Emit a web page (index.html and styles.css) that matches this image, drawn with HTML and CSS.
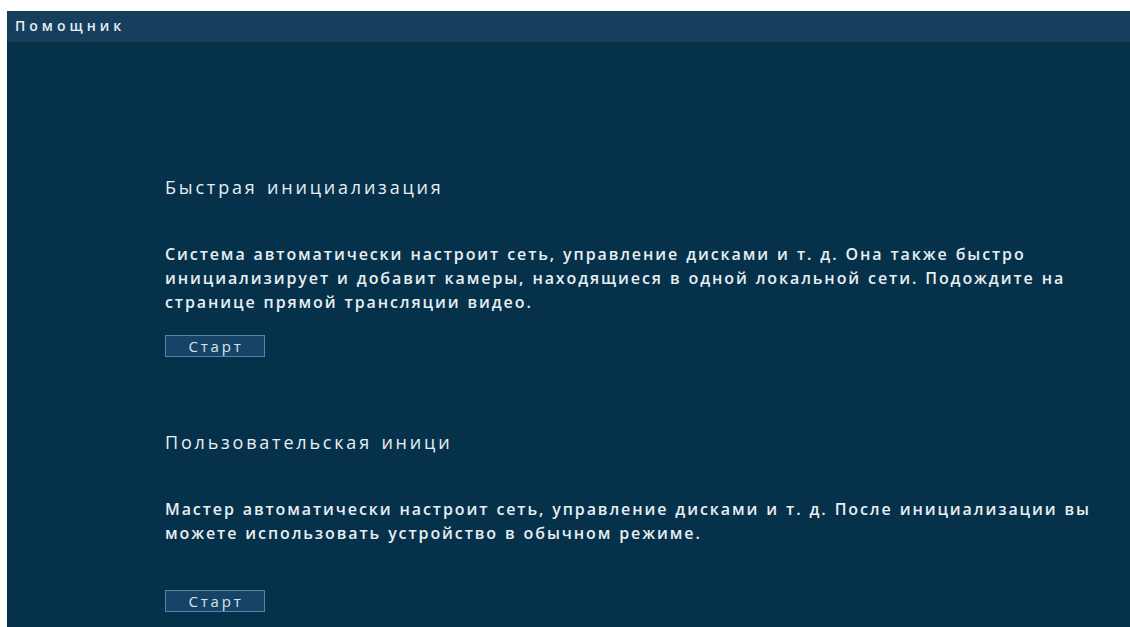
FILE: index.html
```html
<!DOCTYPE html>
<html lang="ru">
<head>
<meta charset="utf-8">
<title>Помощник</title>
<link rel="stylesheet" href="styles.css">
</head>
<body>
<div class="app">
  <header class="titlebar">Помощник</header>
  <main class="content">
    <section class="mode mode-quick">
      <h2 class="mode-title">Быстрая инициализация</h2>
      <p class="mode-desc">Система автоматически настроит сеть, управление дисками и т. д. Она также быстро инициализирует и добавит камеры, находящиеся в одной локальной сети. Подождите на странице прямой трансляции видео.</p>
      <button class="btn">Старт</button>
    </section>
    <section class="mode mode-custom">
      <h2 class="mode-title">Пользовательская иници</h2>
      <p class="mode-desc">Мастер автоматически настроит сеть, управление дисками и т. д. После инициализации вы можете использовать устройство в обычном режиме.</p>
      <button class="btn">Старт</button>
    </section>
  </main>
</div>
</body>
</html>
```
FILE: styles.css
```css
html, body {
  margin: 0;
  height: 100%;
  background: #ffffff;
  overflow: hidden;
}

body {
  padding: 11px 0 0 7px;
  box-sizing: border-box;
  font-family: "Open Sans", "Noto Sans", sans-serif;
}

.app {
  height: 616px;
  background: #05324a;
  display: flex;
  flex-direction: column;
}

/* window caption */
.titlebar {
  height: 31px;
  line-height: 30px;
  padding-left: 8px;
  background: #163f5e;
  border-bottom: 2px solid #0c2c42;
  color: #e8eef3;
  font-size: 14px;
  font-weight: 600;
  letter-spacing: 4px;
}

.content {
  padding: 129px 0 0 158px;
  color: #e9eef2;
}

.mode-title {
  margin: 0;
  font-size: 18px;
  font-weight: 500;
  letter-spacing: 2.8px;
  word-spacing: 2px;
  line-height: 28px;
}

.mode-desc {
  margin: 0;
  width: 928px;
  font-size: 16px;
  font-weight: 600;
  letter-spacing: 1.9px;
  word-spacing: 1px;
  line-height: 24px;
}

.mode-title + .mode-desc { margin-top: 41px; }
.mode-quick .btn { margin-top: 21px; }
.mode-custom { margin-top: 71px; }
.mode-custom .btn { margin-top: 45px; }

.btn {
  display: block;
  width: 100px;
  height: 22px;
  padding: 0;
  background: #174466;
  border: 1px solid #4f86ab;
  color: #d9e4ec;
  font-family: inherit;
  font-size: 15px;
  font-weight: 500;
  letter-spacing: 2.8px;
  text-indent: 2px;
  line-height: 20px;
}
```
